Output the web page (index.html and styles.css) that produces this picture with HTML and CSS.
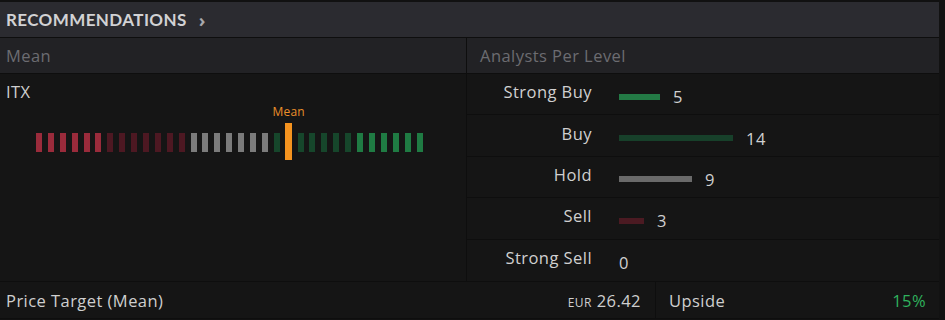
FILE: index.html
```html
<!DOCTYPE html>
<html>
<head>
<meta charset="utf-8">
<link rel="stylesheet" href="styles.css">
</head>
<body>
<div class="widget">
  <div class="topstrip"></div>
  <div class="header">
    <span class="title">RECOMMENDATIONS</span>
    <span class="chev">&#8250;</span>
  </div>
  <div class="panels">
    <section class="panel">
      <div class="subhead">Mean</div>
      <div class="mean-body">
        <div class="ticker">ITX</div>
        <div class="scale">
          <span class="bar sb"></span><span class="bar sb"></span><span class="bar sb"></span><span class="bar sb"></span><span class="bar sb"></span><span class="bar sb"></span>
          <span class="bar s"></span><span class="bar s"></span><span class="bar s"></span><span class="bar s"></span><span class="bar s"></span><span class="bar s"></span><span class="bar s"></span>
          <span class="bar h"></span><span class="bar h"></span><span class="bar h"></span><span class="bar h"></span><span class="bar h"></span><span class="bar h"></span><span class="bar h"></span>
          <span class="bar b"></span>
          <span class="marker"><span class="marker-label">Mean</span></span>
          <span class="bar b"></span><span class="bar b"></span><span class="bar b"></span><span class="bar b"></span><span class="bar b"></span>
          <span class="bar g"></span><span class="bar g"></span><span class="bar g"></span><span class="bar g"></span><span class="bar g"></span><span class="bar g"></span>
        </div>
      </div>
    </section>
    <section class="panel">
      <div class="subhead">Analysts Per Level</div>
      <div class="levels">
        <div class="row"><span class="lbl">Strong Buy</span><span class="lvbar c-sb" style="width:41px"></span><span class="num">5</span></div>
        <div class="row"><span class="lbl">Buy</span><span class="lvbar c-b" style="width:114px"></span><span class="num">14</span></div>
        <div class="row"><span class="lbl">Hold</span><span class="lvbar c-h" style="width:73px"></span><span class="num">9</span></div>
        <div class="row"><span class="lbl">Sell</span><span class="lvbar c-s" style="width:25px"></span><span class="num">3</span></div>
        <div class="row"><span class="lbl">Strong Sell</span><span class="num">0</span></div>
      </div>
    </section>
  </div>
  <div class="footer">
    <div class="cell pt">
      <span class="ft-label">Price Target (Mean)</span>
      <span class="ft-val"><span class="cur">EUR</span> 26.42</span>
    </div>
    <div class="cell up">
      <span class="ft-label">Upside</span>
      <span class="ft-val green">15%</span>
    </div>
  </div>
</div>
</body>
</html>
```

FILE: styles.css
```css
* { box-sizing: border-box; }
html, body { margin: 0; padding: 0; background: #121212; }
body { font-family: "Open Sans", Lato, sans-serif; color: #d0d0d0; font-size: 16.5px; letter-spacing: 0.45px; }

.widget { width: 939px; background: #0e0e0e; }

.topstrip { height: 2px; background: #111; }

.header {
  height: 36px;
  background: #2b2b30;
  display: flex;
  align-items: center;
  padding-left: 6px;
  border-bottom: 1px solid #0e0e0e;
}
.title { font-family: Lato, sans-serif; font-weight: 700; font-size: 17px; color: #d2d2d4; letter-spacing: 0.4px; }
.chev { margin-left: 12px; font-size: 18px; font-weight: 700; color: #a8a8ac; line-height: 1; letter-spacing: 0; }

.panels {
  display: grid;
  grid-template-columns: 466px 472px;
  column-gap: 1px;
  background: #0e0e0e;
}
.panel { background: #151515; }

.subhead {
  height: 36px;
  background: #222225;
  border-bottom: 1px solid #0e0e0e;
  display: flex;
  align-items: center;
  padding-left: 6px;
  color: #6c6c71;
}
.panel + .panel .subhead { padding-left: 13px; }

.mean-body { height: 207px; padding: 8px 6px 0; }
.ticker { line-height: 20px; color: #cfcfcf; }

.scale {
  margin: 21px 0 0 30px;
  display: flex;
  align-items: center;
  gap: 5.9px;
  height: 37px;
}
.bar { width: 6px; height: 19px; flex: none; margin-top: 2px; }
.bar.sb { background: #9a2b3b; }
.bar.s { background: #4d1822; }
.bar.h { background: #7b7b7b; }
.bar.b { background: #16462b; }
.bar.g { background: #1f7b43; }
.marker {
  width: 7px; height: 37px; flex: none;
  background: #f5931f;
  margin: 0 -0.5px;
  position: relative;
}
.marker-label {
  position: absolute;
  bottom: 100%;
  left: 50%;
  transform: translateX(-50%);
  margin-bottom: 4px;
  font-size: 12px;
  line-height: 14px;
  letter-spacing: 0.2px;
  color: #ea8f2a;
}

.levels { height: 207px; }
.row {
  height: 41.4px;
  border-bottom: 1px solid #0e0e0e;
  display: flex;
  align-items: center;
}
.row:last-child { border-bottom: none; }
.lbl {
  width: 125px;
  text-align: right;
  color: #d0d0d0;
  margin-bottom: 5px;
  flex: none;
}
.lvbar { height: 6px; margin-left: 27px; margin-top: 5px; margin-right: 13px; flex: none; }
.lbl + .num { margin-left: 27px; }
.num { margin-top: 5px; color: #d0d0d0; }
.c-sb { background: #237a45; }
.c-b { background: #17402a; }
.c-h { background: #6a6a6a; }
.c-s { background: #4b1a22; }

.footer {
  display: grid;
  grid-template-columns: 655px 283px;
  column-gap: 1px;
  border-top: 1px solid #0e0e0e;
  border-bottom: 1px solid #0e0e0e;
  background: #0e0e0e;
}
.cell {
  height: 36px;
  background: #151515;
  display: flex;
  align-items: center;
  justify-content: space-between;
}
.cell.pt { padding: 0 14px 0 6px; }
.cell.up { padding: 0 13px 0 13px; }
.ft-label { color: #cfcfcf; }
.ft-val { color: #cfcfcf; }
.cur { font-size: 12px; }
.green { color: #2fb25d; }
```
